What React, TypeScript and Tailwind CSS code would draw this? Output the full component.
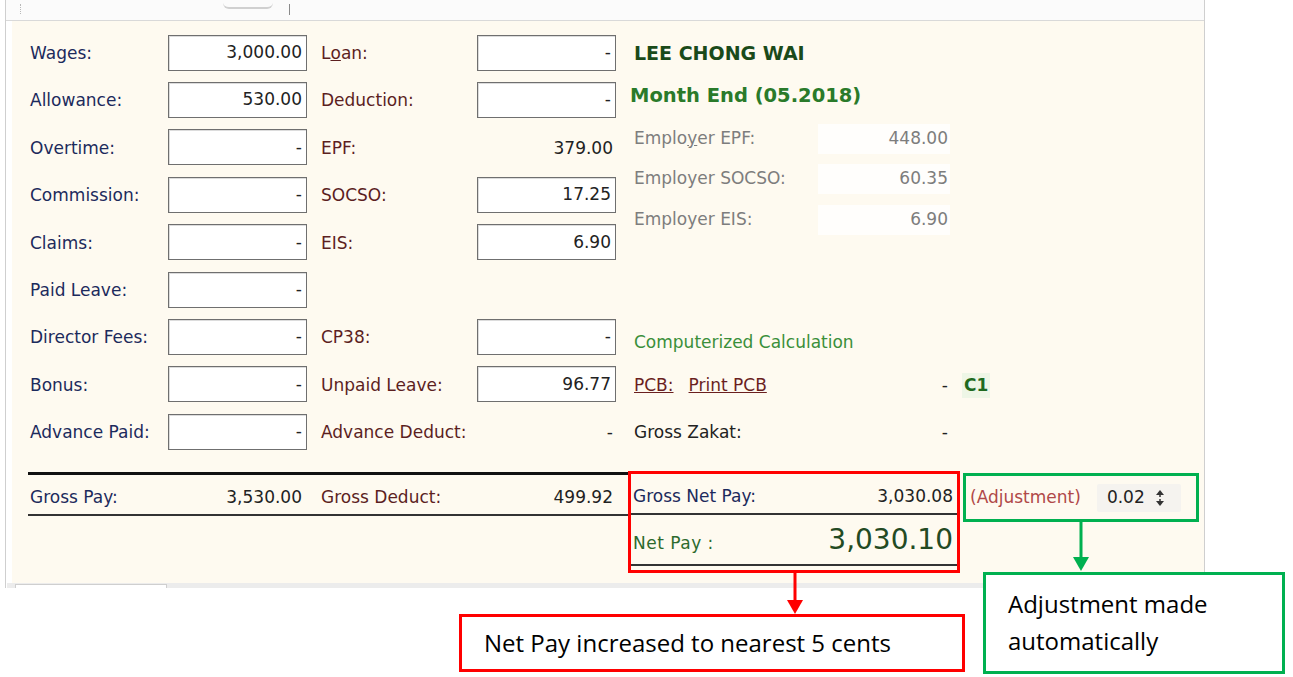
import React from 'react';

const NAVY = 'text-[#1c2a5c]';
const MAROON = 'text-[#5c1f1f]';

function Box({ value }: { value: string }) {
  return (
    <div className="h-[36px] w-[139px] border border-[#6f6f6f] bg-white flex items-center justify-end pr-[4px] text-[#222] shadow-[inset_1px_1px_0_#dcdcdc]">
      {value}
    </div>
  );
}

type Row = {
  left: React.ReactNode;
  leftVal: string;
  right?: React.ReactNode;
  rightVal?: string;
  rightBox?: boolean;
};

const rows: Row[] = [
  { left: <>Wa<u>g</u>es:</>, leftVal: '3,000.00', right: <>L<u>o</u>an:</>, rightVal: '-', rightBox: true },
  { left: 'Allowance:', leftVal: '530.00', right: 'Deduction:', rightVal: '-', rightBox: true },
  { left: 'Overtime:', leftVal: '-', right: 'EPF:', rightVal: '379.00' },
  { left: 'Commission:', leftVal: '-', right: 'SOCSO:', rightVal: '17.25', rightBox: true },
  { left: 'Claims:', leftVal: '-', right: 'EIS:', rightVal: '6.90', rightBox: true },
  { left: 'Paid Leave:', leftVal: '-' },
  { left: 'Director Fees:', leftVal: '-', right: 'CP38:', rightVal: '-', rightBox: true },
  { left: 'Bonus:', leftVal: '-', right: 'Unpaid Leave:', rightVal: '96.77', rightBox: true },
  { left: 'Advance Paid:', leftVal: '-', right: 'Advance Deduct:', rightVal: '-' },
];

const employer = [
  { label: <>Emplo<u>y</u>er EPF:</>, value: '448.00' },
  { label: 'Employer SOCSO:', value: '60.35' },
  { label: 'Employer EIS:', value: '6.90' },
];

export default function App() {
  return (
    <div className="relative w-[1293px] h-[677px] bg-white overflow-hidden font-['DejaVu_Sans',sans-serif] text-[17px]">
      <div className="ml-[5px] w-[1200px] h-[588px] border-l border-r border-[#cfcfcf] flex flex-col">
        {/* top strip */}
        <div className="h-[21px] border-b border-[#d9d9d9] bg-[#fbfbfb] flex items-start">
          <div className="ml-[14px] mt-[4px] w-[3px] h-[10px] border-l border-dotted border-[#b8b8b8]" />
          <div className="ml-[200px] mt-[3px] w-[50px] h-[6px] rounded-b-full border-b-2 border-[#d0d0d0]" />
          <div className="ml-[16px] mt-[4px] w-[1px] h-[11px] bg-[#8a8a8a]" />
        </div>

        {/* cream panel */}
        <div className="flex-1 ml-[6px] bg-[#fefaf0] pl-[18px] pt-[8px] flex flex-col">
          <div className="grid grid-cols-[138px_139px_170px_139px_1fr] grid-rows-[repeat(9,47.4px)]">
            {rows.map((r, i) => (
              <React.Fragment key={i}>
                <div className={`flex items-center pt-[2px] ${NAVY}`} style={{ gridRow: i + 1, gridColumn: 1 }}>
                  {r.left}
                </div>
                <div className="flex items-center" style={{ gridRow: i + 1, gridColumn: 2 }}>
                  <Box value={r.leftVal} />
                </div>
                <div className={`flex items-center pt-[2px] pl-[14px] ${MAROON}`} style={{ gridRow: i + 1, gridColumn: 3 }}>
                  {r.right}
                </div>
                <div className="flex items-center justify-end" style={{ gridRow: i + 1, gridColumn: 4 }}>
                  {r.right && (r.rightBox ? <Box value={r.rightVal || ''} /> : <span className="pr-[3px] pt-[2px] text-[#222]">{r.rightVal}</span>)}
                </div>
              </React.Fragment>
            ))}

            {/* right column top block */}
            <div className="col-start-5 row-start-1 row-span-6 pl-[18px] flex flex-col">
              <div className="h-[47.4px] flex items-center pt-[2px] font-bold text-[19px] text-[#1a4a1a]">LEE CHONG WAI</div>
              <div className="h-[38px] flex items-center -ml-[4px] font-bold text-[19.5px] text-[#2a7a2a]">Month End (05.2018)</div>
              <div className="mt-[4px] flex flex-col">
                {employer.map((e, i) => (
                  <div key={i} className="h-[40.5px] flex items-center text-[#7d7d7d]">
                    <div className="w-[184px]">{e.label}</div>
                    <div className="w-[132px] h-[30px] bg-white/80 flex items-center justify-end pr-[2px]">{e.value}</div>
                  </div>
                ))}
              </div>
            </div>

            <div className="col-start-5 row-start-7 pl-[18px] pt-[12px] flex items-center text-[#3a8f3a]">
              Computerized Calculation
            </div>
            <div className="col-start-5 row-start-8 pl-[18px] pt-[2px] flex items-center">
              <div className="w-[316px] flex justify-between text-[#6a1f1f]">
                <span>
                  <u>PCB:</u>
                  <span className="ml-[15px] underline">Print PCB</span>
                </span>
                <span className="pr-[2px] text-[#222]">-</span>
              </div>
              <span className="ml-[12px] px-[2px] font-bold text-[#1f6a1f] bg-[#eef6e6]">C1</span>
            </div>
            <div className="col-start-5 row-start-9 pl-[18px] pt-[2px] flex items-center">
              <div className="w-[316px] flex justify-between text-[#222]">
                <span>Gross Zakat:</span>
                <span className="pr-[2px]">-</span>
              </div>
            </div>
          </div>

          {/* totals */}
          <div className="mt-[15px] -ml-[2px] flex items-start">
            <div className="w-[600px] mt-[1px] border-t-[3px] border-[#111]">
              <div className="h-[41px] border-b-2 border-[#333] flex items-center pt-[8px]">
                <span className={`w-[138px] pl-[2px] ${NAVY}`}>Gross Pay:</span>
                <span className="w-[139px] text-right pr-[3px] text-[#222]">3,530.00</span>
                <span className={`w-[170px] pl-[16px] ${MAROON}`}>Gross Deduct:</span>
                <span className="w-[139px] text-right pr-[1px] text-[#222]">499.92</span>
              </div>
            </div>
            <div className="w-[332px] h-[102px] border-[3px] border-[#ff0000] flex flex-col">
              <div className="h-[41px] border-b-2 border-[#333] flex items-center justify-between pl-[2px] pr-[4px] pt-[7px]">
                <span className={NAVY}>Gross Net Pay:</span>
                <span className="text-[#222]">3,030.08</span>
              </div>
              <div className="h-[51px] border-b-2 border-[#333] flex items-center justify-between pl-[2px] pr-[4px]">
                <span className="text-[#2d6a2d] tracking-[0.5px] mt-[10px]">Net Pay :</span>
                <span className="text-[28px] text-[#234a23] mt-[2px]">3,030.10</span>
              </div>
            </div>
            <div className="ml-[3px] mt-[2px] w-[236px] h-[49px] border-[3px] border-[#00b050] flex items-center pl-[4px] pt-[2px]">
              <span className="text-[#b04848]">(Adjustment)</span>
              <div className="ml-[16px] w-[84px] h-[28px] rounded-[2px] bg-[#f5f3ef] flex items-center pl-[10px]">
                <span className="text-[#222]">0.02</span>
                <svg width="12" height="22" viewBox="0 0 12 22" className="ml-[9px]">
                  <path d="M6 3 L10 8 L2 8 Z" fill="#333" />
                  <path d="M6 8 L6 10" stroke="#333" strokeWidth="1.5" />
                  <path d="M6 19 L10 14 L2 14 Z" fill="#333" />
                  <path d="M6 12 L6 14" stroke="#333" strokeWidth="1.5" />
                </svg>
              </div>
            </div>
          </div>
        </div>

        {/* bottom strip */}
        <div className="h-[5px] ml-[1px] bg-[#ececec] flex items-end">
          <div className="ml-[8px] w-[152px] h-[4px] bg-white border-t border-l border-r border-[#cfcfcf]" />
        </div>
      </div>

      {/* callouts */}
      <svg className="absolute left-[785px] top-[573px]" width="20" height="42" viewBox="0 0 20 42">
        <path d="M10 0 L10 30" stroke="#ff0000" strokeWidth="3" />
        <path d="M2 27 L18 27 L10 41 Z" fill="#ff0000" />
      </svg>
      <svg className="absolute left-[1071px] top-[522px]" width="20" height="50" viewBox="0 0 20 50">
        <path d="M10 0 L10 38" stroke="#00b050" strokeWidth="3" />
        <path d="M2 35 L18 35 L10 49 Z" fill="#00b050" />
      </svg>

      <div className="absolute left-[459px] top-[614px] w-[506px] h-[58px] border-[3px] border-[#ff0000] bg-white flex items-center pl-[22px] font-['Open_Sans',sans-serif] text-[24px] text-black">
        Net Pay increased to nearest 5 cents
      </div>
      <div className="absolute left-[983px] top-[572px] w-[302px] h-[102px] border-[3px] border-[#00b050] bg-white pl-[22px] pt-[10px] font-['Open_Sans',sans-serif] text-[24px] leading-[37px] text-black">
        Adjustment made
        <br />
        automatically
      </div>
    </div>
  );
}
